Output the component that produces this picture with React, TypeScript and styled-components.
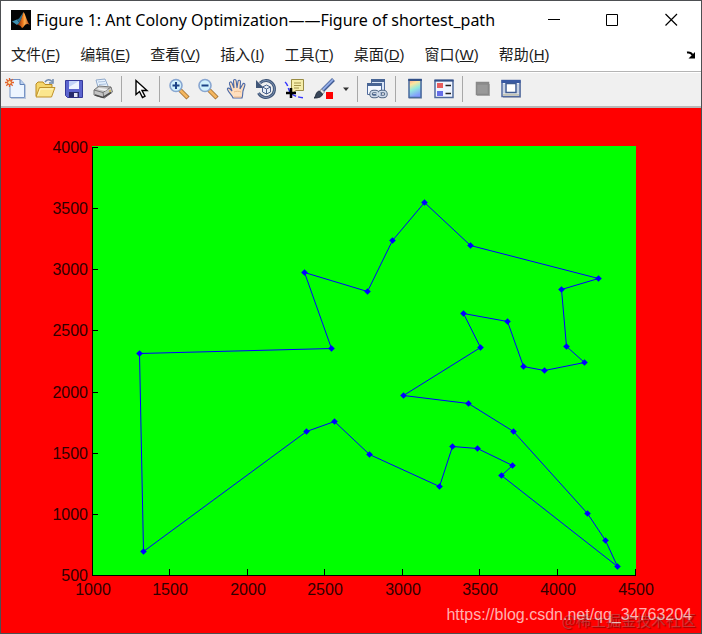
import React from "react";
import styled, { createGlobalStyle } from "styled-components";

const GlobalStyle = createGlobalStyle`
  * { box-sizing: border-box; }
  body { margin: 0; background: #fff; }
`;

const Frame = styled.main`
  position: relative;
  display: flex;
  flex-direction: column;
  min-height: 100vh;
  border: 1px solid #4d4f52;
  background: #f00;
`;

const TitleBar = styled.header`
  display: flex;
  align-items: center;
  height: 37px;
  padding-left: 10px;
  background: #fff;
`;

const Title = styled.h1`
  flex: 1;
  margin: 0 0 0 5px;
  font: 400 16px/20px "Noto Sans", "Noto Sans CJK SC", sans-serif;
  white-space: nowrap;
  color: #000;
`;

const WindowButton = styled.button`
  display: grid;
  place-items: center;
  width: 59px;
  height: 37px;
  padding: 0;
  border: 0;
  background: none;
`;

const MenuBar = styled.nav`
  display: flex;
  align-items: center;
  height: 34px;
  padding-left: 10px;
  gap: 20px;
  border-bottom: 1px solid #b4b4b4;
  background: #fff;
`;

const MenuButton = styled.button`
  padding: 0;
  border: 0;
  background: none;
  color: #1c1c1c;
  font: 15px/20px "Liberation Sans", "Noto Sans CJK SC", sans-serif;
  white-space: nowrap;
`;

const DockButton = styled(MenuButton)`
  display: grid;
  margin: 0 5px 0 auto;
`;

const ToolBar = styled.div`
  display: flex;
  align-items: center;
  height: 36px;
  padding-bottom: 2px;
  border-top: 1px solid #fff;
  border-bottom: 2px solid #b8b8b8;
  background: #f0f0f0;
`;

const Tool = styled.button<{ $narrow?: boolean }>`
  display: grid;
  place-items: center;
  width: ${(p) => (p.$narrow ? 15 : 29)}px;
  height: 28px;
  padding: 0;
  border: 0;
  background: none;
`;

const Separator = styled.span`
  width: 9px;
  height: 26px;
  border-left: 4px solid #f0f0f0;
  border-right: 4px solid #f0f0f0;
  background: #a8a8a8;
`;

const Chart = styled.svg`
  display: block;
  width: 100%;
  font: 16px "Liberation Sans", Arial, sans-serif;
`;

const SourceMark = styled.span`
  position: absolute;
  right: 9px;
  bottom: 8px;
  color: rgba(255, 255, 255, 0.7);
  font: 16px/20px "Liberation Sans", Arial, sans-serif;
`;

const SiteMark = styled.span`
  position: absolute;
  right: 5px;
  bottom: 2px;
  color: rgba(190, 90, 90, 0.6);
  font: 15px/22px "Noto Sans CJK SC", sans-serif;
  text-shadow: 1px 1px 1px rgba(70, 0, 0, 0.5);
`;

const menus = [
  ["文件", "F"],
  ["编辑", "E"],
  ["查看", "V"],
  ["插入", "I"],
  ["工具", "T"],
  ["桌面", "D"],
  ["窗口", "W"],
  ["帮助", "H"],
];

const tour = [
  [1304, 2312], [2545, 2357], [2370, 2975], [2778, 2826], [2935, 3240],
  [3140, 3550], [3439, 3201], [4263, 2931], [4029, 2838], [4061, 2370],
  [4177, 2244], [3918, 2179], [3780, 2212], [3676, 2578], [3394, 2643],
  [3507, 2367], [3007, 1970], [3429, 1908], [3715, 1678], [4196, 1004],
  [4312, 790], [4386, 570], [3639, 1315], [3712, 1399], [3488, 1535],
  [3326, 1556], [3238, 1229], [2788, 1491], [2562, 1756], [2381, 1676],
  [1332, 695],
];

const left = 91;
const right = 634;
const top = 39;
const bottom = 467;
const ticks = [1000, 1500, 2000, 2500, 3000, 3500, 4000, 4500];
const sx = (v: number) => Math.floor(left + ((v - 1000) / 3500) * (right - left));
const sy = (v: number) => Math.round(bottom - ((v - 500) / 3500) * (bottom - top));

function Plot() {
  const path = tour.map(([x, y]) => `${sx(x) + 0.5},${sy(y) + 0.5}`).join(" ");
  return (
    <Chart viewBox="0 0 700 525" role="img" aria-label="shortest_path">
      <rect x={left} y={top - 1} width={right - left + 1} height={bottom - top + 2} fill="#0f0" />
      <g stroke="#000" fill="none" shapeRendering="crispEdges">
        <path d={`M${left + 0.5} ${top}V${bottom + 0.5}H${right + 1}`} />
        {ticks.map((t) => (
          <path key={t} d={`M${sx(t) + 0.5} ${bottom}v-6`} />
        ))}
        {ticks.map((t) => (
          <path key={t} d={`M${left} ${sy(t - 500) + 0.5}h6`} />
        ))}
      </g>
      <g fill="#300000" fontSize="16">
        {ticks.map((t) => (
          <text key={t} x={sx(t) + 1} y={bottom + 20} textAnchor="middle">{t}</text>
        ))}
        {ticks.map((t) => (
          <text key={t} x={left - 4} y={sy(t - 500) + 6} textAnchor="end">{t - 500}</text>
        ))}
      </g>
      <polygon points={path} fill="none" stroke="#00f" />
      {tour.map(([x, y]) => (
        <path
          key={`${x}-${y}`}
          d={`M${sx(x) - 2.8} ${sy(y) + 0.5}l3.3-3.3 3.3 3.3-3.3 3.3z`}
          fill="#00f"
        />
      ))}
    </Chart>
  );
}

const Icon = ({ children, size = 22 }: { children: React.ReactNode; size?: number }) => (
  <svg width={size} height={size} viewBox={`0 0 ${size} ${size}`} fill="none" aria-hidden="true">
    {children}
  </svg>
);

const MatlabLogo = () => (
  <svg width="20" height="20" viewBox="0 0 20 20" aria-hidden="true">
    <defs>
      <linearGradient id="peak" x1="0" x2="1">
        <stop offset="0" stopColor="#6b1408" />
        <stop offset=".45" stopColor="#f07a1c" />
        <stop offset=".6" stopColor="#ffb050" />
        <stop offset="1" stopColor="#a02808" />
      </linearGradient>
    </defs>
    <rect width="20" height="20" fill="#050505" />
    <path d="M1 11.500l5-2 2.500 3.500L6 15z" fill="#3f8fb0" />
    <path d="M6 9.500l2-1L12.500 2l-2 7-2 4z" fill="#2b6d8a" />
    <path d="M12.500 2c2 2 3 9 6.500 13-2-1-3-1.500-4.500-.5-1.500 1-2 3-3.500 3.500-1-2-2.500-3.500-5-3 3-1 5-8 6.500-13z" fill="url(#peak)" />
  </svg>
);

const NewIcon = () => (
  <Icon>
    <path d="M6 2h10l5 5v14H6z" fill="#7d97c4" opacity=".45" />
    <path d="M5 1.500h10l4.500 5v13H5z" fill="#edf5ff" stroke="#7794c6" />
    <path d="M15 1.500v5h4.500" fill="#bcd1ef" stroke="#5f80b7" />
    <path d="M4.500 0v9M0 4.500h9M1.300 1.300l6.400 6.400M7.700 1.300L1.300 7.700" stroke="#e0622c" strokeWidth="1.300" />
    <circle cx="4.500" cy="4.500" r="2" fill="#ffe0a0" stroke="#e0622c" />
  </Icon>
);

const OpenIcon = () => (
  <Icon>
    <path d="M11 4c2-3 5-3 7-.5M19 1v4h-4" stroke="#6f89ad" strokeWidth="1.500" />
    <path d="M2 18V6l2-2h5l2 2.500h7V10" fill="#f5d66c" stroke="#b98a20" />
    <path d="M2 19l3.500-9.500H21L17.500 19z" fill="#fbe68d" stroke="#c0922b" />
    <path d="M4 17.500l2.300-6.500H19" stroke="#fff8c9" />
  </Icon>
);

const SaveIcon = () => (
  <Icon>
    <path d="M2.500 2.500h17v17h-15l-2-2z" fill="#5c65cf" stroke="#34399b" />
    <path d="M6 3h10v8H6z" fill="#eef3ff" />
    <path d="M6 3h10l-10 6z" fill="#c3d3f8" />
    <path d="M6 14h10v5.500H6z" fill="#26296c" />
    <path d="M11 15h3.500v4H11z" fill="#e4e6f5" />
  </Icon>
);

const PrintIcon = () => (
  <Icon>
    <path d="M6 9L4 2l9-1 3 7" fill="#e8f3ff" stroke="#8fa8c9" />
    <path d="M6 4l7-.5M7 6.500l7-.5" stroke="#a9bfdc" />
    <path d="M2 12l5-4 12 1 1.500 5-8 6L2 17z" fill="#c4c4c4" stroke="#777" />
    <path d="M2 12l9 2.500L19 9M11 14.500l1 5.500" stroke="#717171" />
    <path d="M3 17l8 2.500 8-5" stroke="#4a4a4a" strokeWidth="1.500" />
    <path d="M7 10l9 1-3 2-8-2z" fill="#f1f1f1" />
    <circle cx="18" cy="13" r="1" fill="#cbb54b" />
  </Icon>
);

const PointerIcon = () => (
  <Icon>
    <path d="M6 2.500v14l3.500-3 3 6 2.500-1.200-3-5.800H17z" fill="#fff" stroke="#000" strokeWidth="1.400" />
  </Icon>
);

const ZoomIcon = ({ plus }: { plus?: boolean }) => (
  <Icon>
    <path d="M12 12l8 8" stroke="#9b6a2d" strokeWidth="4.500" />
    <path d="M12 12l7.500 7.500" stroke="#f4b65f" strokeWidth="2.800" />
    <circle cx="8" cy="7.500" r="6" fill="#d1f1fc" stroke="#88a6d1" strokeWidth="1.600" />
    <path d={plus ? "M4.500 7.500h7M8 4v7" : "M4.500 7.500h7"} stroke="#1b4386" strokeWidth="2" />
  </Icon>
);

const HandIcon = () => (
  <Icon>
    <path d="M7 20c-1-3-4-5-5.500-8.500C1 10 3 9.500 4 11l2 2L3.500 6C3 4 5.300 3 6 5l2 5-.5-7c0-2 2.500-2 2.700 0l.8 7 1-6.500c.3-2 2.700-1.500 2.500.5l-.5 7 2.500-4.500c1-2 3-1 2.300 1L17 13c-.5 3 0 4-1 7z" fill="#ffdfbf" stroke="#4b69a7" strokeWidth="1.100" />
    <path d="M8 14c2-1 5-1 7 0M8 19h7" stroke="#edb98a" />
  </Icon>
);

const RotateIcon = () => (
  <Icon>
    <path d="M5 5a8.500 8.500 0 1 1-1.500 10" stroke="#405678" strokeWidth="3" />
    <path d="M5 5a8.500 8.500 0 1 1-1.500 10" stroke="#7d93b3" />
    <path d="M1 2v8h8z" fill="#405678" />
    <path d="M7.500 9l4-2 4 2v5l-4 2-4-2zM7.500 9l4 2 4-2M11.500 11v5" fill="#e5edf8" stroke="#4c638b" />
  </Icon>
);

const DataCursorIcon = () => (
  <Icon>
    <path d="M1 4c3 2 3 7 5 10s6 5 14 6" stroke="#3434ff" strokeWidth="1.500" strokeDasharray="5 2" />
    <path d="M7.500 1.500h12v11H12L7.500 16z" fill="#f5edaa" stroke="#998c44" />
    <path d="M10 5h7M10 7.500h7M10 10h5" stroke="#a3944b" />
    <path d="M2 15h10M7 10v10" stroke="#000" strokeWidth="2.500" />
  </Icon>
);

const BrushIcon = () => (
  <Icon>
    <path d="M20.500 1.500L9 13" stroke="#405b92" strokeWidth="4" />
    <path d="M20 1.500L9 12.500" stroke="#91abe5" strokeWidth="2" />
    <path d="M8.500 11l3 3-2 2.500-3-3z" fill="#e8e8e8" stroke="#777" strokeWidth=".7" />
    <path d="M6.500 13l3 3c-.5 3-4 4-8.500 4 2-1 1.500-6.500 5.500-7z" fill="#39475a" stroke="#1f2a39" />
    <path d="M13 14h7v7h-7z" fill="#f00" />
  </Icon>
);

const LinkIcon = () => (
  <Icon>
    <path d="M5.500 1.500h13v11h-13z" fill="#dae6f7" stroke="#506b9c" />
    <path d="M5 2.500h14" stroke="#486595" strokeWidth="3" />
    <path d="M1.500 5.500h14v11h-14z" fill="#f5f9ff" stroke="#506b9c" />
    <path d="M1 6.500h15" stroke="#486595" strokeWidth="3" />
    <g stroke="#506784" strokeWidth="3.500">
      <rect x="5" y="13.500" width="7" height="5" rx="2.500" />
      <rect x="13" y="13.500" width="7" height="5" rx="2.500" />
      <path d="M10 16h5" />
    </g>
    <g stroke="#d0dceb" strokeWidth="1.500">
      <rect x="5" y="13.500" width="7" height="5" rx="2.500" />
      <rect x="13" y="13.500" width="7" height="5" rx="2.500" />
      <path d="M10 16h5" />
    </g>
  </Icon>
);

const ColorbarIcon = () => (
  <Icon>
    <defs>
      <linearGradient id="spectrum" x2=".3" y2="1">
        <stop offset="0" stopColor="#ff9c91" />
        <stop offset=".3" stopColor="#ffe59d" />
        <stop offset=".6" stopColor="#92eadd" />
        <stop offset="1" stopColor="#829cff" />
      </linearGradient>
    </defs>
    <path d="M5 2h13v19H5z" fill="#c2c5cd" />
    <path d="M5 1.500h12v18H5z" fill="url(#spectrum)" stroke="#486a9d" strokeWidth="1.500" />
    <path d="M4.300 2h13.500" stroke="#314f87" strokeWidth="2" />
  </Icon>
);

const LegendIcon = () => (
  <Icon>
    <path d="M2 2.500h18v17H2z" fill="#f0f5ff" stroke="#506b9c" strokeWidth="1.500" />
    <path d="M1.500 2.500h19" stroke="#324f88" strokeWidth="2" />
    <path d="M4 5h6v5H4z" fill="#e75d5d" />
    <path d="M4 13h6v5H4z" fill="#666ee8" />
    <path d="M12.500 7.500H18M12.500 15.500H18" stroke="#222" strokeWidth="1.600" />
  </Icon>
);

const HideIcon = () => (
  <Icon>
    <path d="M6 6h13v12H6z" fill="#b2b2b2" />
    <path d="M5.500 4.500h12v12h-12z" fill="#999" stroke="#888" strokeWidth="1.500" />
    <path d="M6 6h11" stroke="#838383" />
  </Icon>
);

const ShowIcon = () => (
  <Icon>
    <path d="M3 3h18v17H3z" fill="#b7bac1" />
    <path d="M2 2.500h18v16H2z" fill="#e9eef7" stroke="#5069a0" strokeWidth="1.500" />
    <path d="M1.500 3.500h19" stroke="#3859a3" strokeWidth="3" />
    <path d="M6 5.500h10v9H6z" fill="#fff" stroke="#3e5b92" strokeWidth="1.500" />
    <path d="M3 16.700h16" stroke="#c4c4b5" strokeWidth="2" />
    <path d="M4 6v9M18 6v9" stroke="#a5b6d1" />
  </Icon>
);

const CaretIcon = () => (
  <Icon size={8}>
    <path d="M1 2.500h6L4 6z" fill="#333" />
  </Icon>
);

const toolGroups: [string, React.ReactNode][][] = [
  [["New figure", <NewIcon />], ["Open", <OpenIcon />], ["Save", <SaveIcon />], ["Print", <PrintIcon />]],
  [["Edit plot", <PointerIcon />]],
  [
    ["Zoom in", <ZoomIcon plus />], ["Zoom out", <ZoomIcon />], ["Pan", <HandIcon />],
    ["Rotate", <RotateIcon />], ["Data cursor", <DataCursorIcon />], ["Brush", <BrushIcon />],
    ["Brush colour", <CaretIcon />],
  ],
  [["Link plot", <LinkIcon />]],
  [["Colorbar", <ColorbarIcon />], ["Legend", <LegendIcon />]],
  [["Hide plot tools", <HideIcon />], ["Show plot tools", <ShowIcon />]],
];

export default function App() {
  return (
    <>
      <GlobalStyle />
      <Frame>
        <TitleBar>
          <MatlabLogo />
          <Title>Figure 1: Ant Colony Optimization——Figure of shortest_path</Title>
          <WindowButton aria-label="Minimize">
            <Icon size={13}><path d="M1 6.500h12" stroke="#000" /></Icon>
          </WindowButton>
          <WindowButton aria-label="Maximize">
            <Icon size={13}><path d="M.5 1.500h11v11H.5z" stroke="#000" /></Icon>
          </WindowButton>
          <WindowButton aria-label="Close">
            <Icon size={13}><path d="M.5 1l11.500 11.500M12 1L.5 12.500" stroke="#000" strokeWidth="1.200" /></Icon>
          </WindowButton>
        </TitleBar>
        <MenuBar>
          {menus.map(([label, key]) => (
            <MenuButton key={key}>{label}(<u>{key}</u>)</MenuButton>
          ))}
          <DockButton aria-label="Dock figure">
            <Icon size={10}>
              <path d="M1 2.500c3-.5 4.500.5 5.500 2.500" stroke="#000" strokeWidth="2" />
              <path d="M9 2v6.500H2.500z" fill="#000" />
            </Icon>
          </DockButton>
        </MenuBar>
        <ToolBar role="toolbar">
          {toolGroups.map((group, i) => (
            <React.Fragment key={i}>
              {i > 0 && <Separator />}
              {group.map(([name, icon]) => (
                <Tool key={name} aria-label={name} $narrow={name === "Brush colour"}>{icon}</Tool>
              ))}
            </React.Fragment>
          ))}
        </ToolBar>
        <Plot />
        <SiteMark>@稀土掘金技术社区</SiteMark>
        <SourceMark>https://blog.csdn.net/qq_34763204</SourceMark>
      </Frame>
    </>
  );
}
